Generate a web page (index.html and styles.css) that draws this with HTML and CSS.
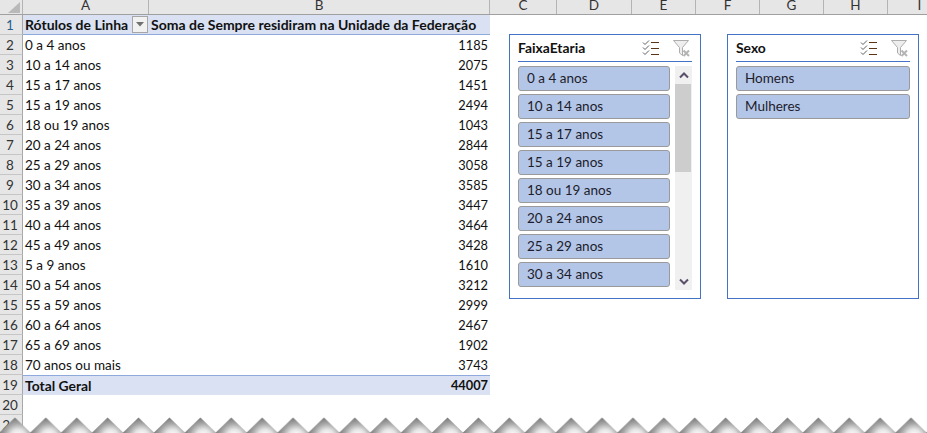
FILE: index.html
```html
<!DOCTYPE html>
<html lang="pt">
<head>
<meta charset="utf-8">
<title>Tabela dinâmica</title>
<link rel="stylesheet" href="styles.css">
</head>
<body>
<main class="sheet">
  <div class="col-heads">
    <div class="corner"><svg width="22" height="14" viewBox="0 0 22 14"><polygon points="8,13 20,13 20,2" fill="#b9b9b9"/></svg></div>
    <div class="ch w-a">A</div><div class="ch w-b">B</div><div class="ch w-c">C</div><div class="ch w-d">D</div><div class="ch w-64">E</div><div class="ch w-64">F</div><div class="ch w-64">G</div><div class="ch w-64">H</div><div class="ch w-64">I</div>
  </div>
  <div class="row head"><div class="rh">1</div><div class="ca">Rótulos de Linha<span class="drop"><svg width="8" height="5" viewBox="0 0 8 5"><polygon points="0,0 8,0 4,4.5" fill="#707070"/></svg></span></div><div class="cb cb-head">Soma de Sempre residiram na Unidade da Federação</div></div>
  <div class="row"><div class="rh">2</div><div class="ca">0 a 4 anos</div><div class="cb">1185</div></div>
  <div class="row"><div class="rh">3</div><div class="ca">10 a 14 anos</div><div class="cb">2075</div></div>
  <div class="row"><div class="rh">4</div><div class="ca">15 a 17 anos</div><div class="cb">1451</div></div>
  <div class="row"><div class="rh">5</div><div class="ca">15 a 19 anos</div><div class="cb">2494</div></div>
  <div class="row"><div class="rh">6</div><div class="ca">18 ou 19 anos</div><div class="cb">1043</div></div>
  <div class="row"><div class="rh">7</div><div class="ca">20 a 24 anos</div><div class="cb">2844</div></div>
  <div class="row"><div class="rh">8</div><div class="ca">25 a 29 anos</div><div class="cb">3058</div></div>
  <div class="row"><div class="rh">9</div><div class="ca">30 a 34 anos</div><div class="cb">3585</div></div>
  <div class="row"><div class="rh">10</div><div class="ca">35 a 39 anos</div><div class="cb">3447</div></div>
  <div class="row"><div class="rh">11</div><div class="ca">40 a 44 anos</div><div class="cb">3464</div></div>
  <div class="row"><div class="rh">12</div><div class="ca">45 a 49 anos</div><div class="cb">3428</div></div>
  <div class="row"><div class="rh">13</div><div class="ca">5 a 9 anos</div><div class="cb">1610</div></div>
  <div class="row"><div class="rh">14</div><div class="ca">50 a 54 anos</div><div class="cb">3212</div></div>
  <div class="row"><div class="rh">15</div><div class="ca">55 a 59 anos</div><div class="cb">2999</div></div>
  <div class="row"><div class="rh">16</div><div class="ca">60 a 64 anos</div><div class="cb">2467</div></div>
  <div class="row"><div class="rh">17</div><div class="ca">65 a 69 anos</div><div class="cb">1902</div></div>
  <div class="row"><div class="rh">18</div><div class="ca">70 anos ou mais</div><div class="cb">3743</div></div>
  <div class="row total"><div class="rh">19</div><div class="ca">Total Geral</div><div class="cb">44007</div></div>
  <div class="row"><div class="rh">20</div></div>
  <div class="row"><div class="rh">21</div></div>
</main>

<section class="slicer slicer-age">
  <header class="slicer-head">
    <h2>FaixaEtaria</h2>
    <svg class="ico-multi" width="17" height="16" viewBox="0 0 17 16"><path d="M1 2.500l2 2 4-4M1 7.500l2 2 4-4M1 12.500l2 2 4-4" fill="none" stroke="#5f5f5f"/><path d="M9 2.500h8M9 8.500h8M9 14.500h8" stroke="#5c3413"/></svg>
    <svg class="ico-filter" width="17" height="17" viewBox="0 0 17 17"><path d="M.5.500h15l-6 7v8l-3-2.500v-5.500z" fill="#eeeeee" stroke="#adadad"/><path d="M10.500 10.500l5.500 5.500M16 10.500l-5.500 5.500" stroke="#b4b4b4" stroke-width="2"/></svg>
  </header>
  <div class="slicer-body">
    <ul class="items">
      <li>0 a 4 anos</li><li>10 a 14 anos</li><li>15 a 17 anos</li><li>15 a 19 anos</li><li>18 ou 19 anos</li><li>20 a 24 anos</li><li>25 a 29 anos</li><li>30 a 34 anos</li>
    </ul>
    <div class="scrollbar">
      <div class="arrow"><svg width="10" height="7" viewBox="0 0 10 7"><path d="M1 5.500l4-4 4 4" fill="none" stroke="#5a4f68" stroke-width="2"/></svg></div>
      <div class="thumb"></div>
      <div class="arrow arrow-down"><svg width="10" height="7" viewBox="0 0 10 7"><path d="M1 1.500l4 4 4-4" fill="none" stroke="#5a4f68" stroke-width="2"/></svg></div>
    </div>
  </div>
</section>

<section class="slicer slicer-sex">
  <header class="slicer-head">
    <h2>Sexo</h2>
    <svg class="ico-multi" width="17" height="16" viewBox="0 0 17 16"><path d="M1 2.500l2 2 4-4M1 7.500l2 2 4-4M1 12.500l2 2 4-4" fill="none" stroke="#5f5f5f"/><path d="M9 2.500h8M9 8.500h8M9 14.500h8" stroke="#5c3413"/></svg>
    <svg class="ico-filter" width="17" height="17" viewBox="0 0 17 17"><path d="M.5.500h15l-6 7v8l-3-2.500v-5.500z" fill="#eeeeee" stroke="#adadad"/><path d="M10.500 10.500l5.500 5.500M16 10.500l-5.500 5.500" stroke="#b4b4b4" stroke-width="2"/></svg>
  </header>
  <div class="slicer-body">
    <ul class="items"><li>Homens</li><li>Mulheres</li></ul>
  </div>
</section>

<svg class="torn" width="927" height="16" viewBox="0 0 927 16">
  <defs>
    <radialGradient id="fade" gradientUnits="userSpaceOnUse" cx="18.500" cy="20" r="19">
      <stop offset="0.1" stop-color="#ffffff"/>
      <stop offset="0.4" stop-color="#e4e4e4"/>
      <stop offset="0.7" stop-color="#a8a8a8"/>
      <stop offset="1" stop-color="#7c7c7c"/>
    </radialGradient>
    <pattern id="teeth" x="-0.5" y="0" width="30.9" height="16" patternUnits="userSpaceOnUse">
      <polygon points="0,15.500 15.450,0.500 30.900,15.500 30.900,16 0,16" fill="url(#fade)"/>
    </pattern>
  </defs>
  <rect width="927" height="16" fill="url(#teeth)"/>
</svg>
</body>
</html>
```

FILE: styles.css
```css
* { box-sizing: border-box; }
html, body { margin: 0; padding: 0; }
body {
  position: relative;
  width: 927px;
  height: 433px;
  overflow: hidden;
  background: #fff;
  font-family: "Lato", "Liberation Sans", sans-serif;
  font-size: 13.5px;
  color: #111;
}
.sheet { display: flex; flex-direction: column; }
.col-heads { display: flex; height: 15px; background: #e6e6e6; border-bottom: 1px solid #a0a0a0; }
.corner { width: 23px; flex: none; border-right: 1px solid #b4b4b4; line-height: 0; }
.ch {
  flex: none;
  border-right: 1px solid #b4b4b4;
  text-align: center;
  line-height: 11px;
  font-size: 13.5px;
  color: #333;
  height: 14px;
}
.w-a { width: 126px; }
.w-b { width: 341px; }
.w-c { width: 67px; }
.w-d { width: 75px; }
.w-64 { width: 64px; }
.row { display: flex; height: 20px; line-height: 19px; }
.rh {
  flex: none;
  width: 23px;
  padding-top: 1px;
  padding-right: 2px;
  background: #e6e6e6;
  border-right: 1px solid #a8a8a8;
  border-bottom: 1px solid #c6c6c6;
  text-align: center;
  color: #333;
}
.ca {
  flex: none;
  position: relative;
  width: 126px;
  padding-top: 1px;
  padding-left: 2px;
  white-space: nowrap;
}
.cb {
  flex: none;
  width: 341px;
  padding-top: 1px;
  padding-right: 2px;
  font-size: 12.8px;
  text-align: right;
  white-space: nowrap;
}
.head .ca, .head .cb { background: #d9e1f2; border-bottom: 1px solid #8ea9db; padding-top: 0; font-weight: 700; font-size: 14px; line-height: 19px; }
.head .cb-head { text-align: left; padding-left: 2px; padding-right: 0; }
.total .ca, .total .cb { background: #d9e1f2; border-top: 1px solid #8ea9db; padding-top: 0; font-weight: 700; font-size: 13.9px; line-height: 19px; }
.total .cb { font-size: 12.8px; }
.head .rh { color: #2a5d8f; }
.drop {
  position: absolute;
  top: 1px;
  right: 1px;
  display: flex;
  align-items: center;
  justify-content: center;
  width: 16px;
  height: 17px;
  background: #f1f1f1;
  border: 1px solid #a6a6a6;
}
.slicer {
  position: absolute;
  top: 34px;
  width: 192px;
  height: 265px;
  padding: 0 8px;
  background: #fff;
  border: 1px solid #4472c4;
}
.slicer-age { left: 509px; }
.slicer-sex { left: 727px; }
.slicer-head {
  display: flex;
  align-items: center;
  height: 27px;
  border-bottom: 1px solid #4472c4;
}
.slicer-head h2 { flex: 1; margin: 0 0 2px; font-size: 13.9px; font-weight: 700; color: #111; }
.ico-multi { margin-right: 14px; }
.ico-filter { margin-right: 2px; }
.slicer-body { display: flex; gap: 5px; padding-top: 4px; }
.items { flex: 1; display: flex; flex-direction: column; gap: 3px; margin: 0; padding: 0; list-style: none; }
.items li {
  height: 25px;
  padding-left: 8px;
  line-height: 23px;
  background: #b4c6e7;
  border: 1px solid #9a9a9a;
  border-radius: 3px;
  color: #1c1c2c;
}
.scrollbar {
  flex: none;
  display: flex;
  flex-direction: column;
  width: 17px;
  height: 224px;
  background: #f0f0f0;
}
.arrow { display: flex; justify-content: center; align-items: center; height: 18px; line-height: 0; }
.arrow-down { margin-top: auto; }
.thumb { width: 16px; height: 88px; background: #cdcdcd; }
.torn { position: absolute; left: 0; top: 417px; display: block; }
```
